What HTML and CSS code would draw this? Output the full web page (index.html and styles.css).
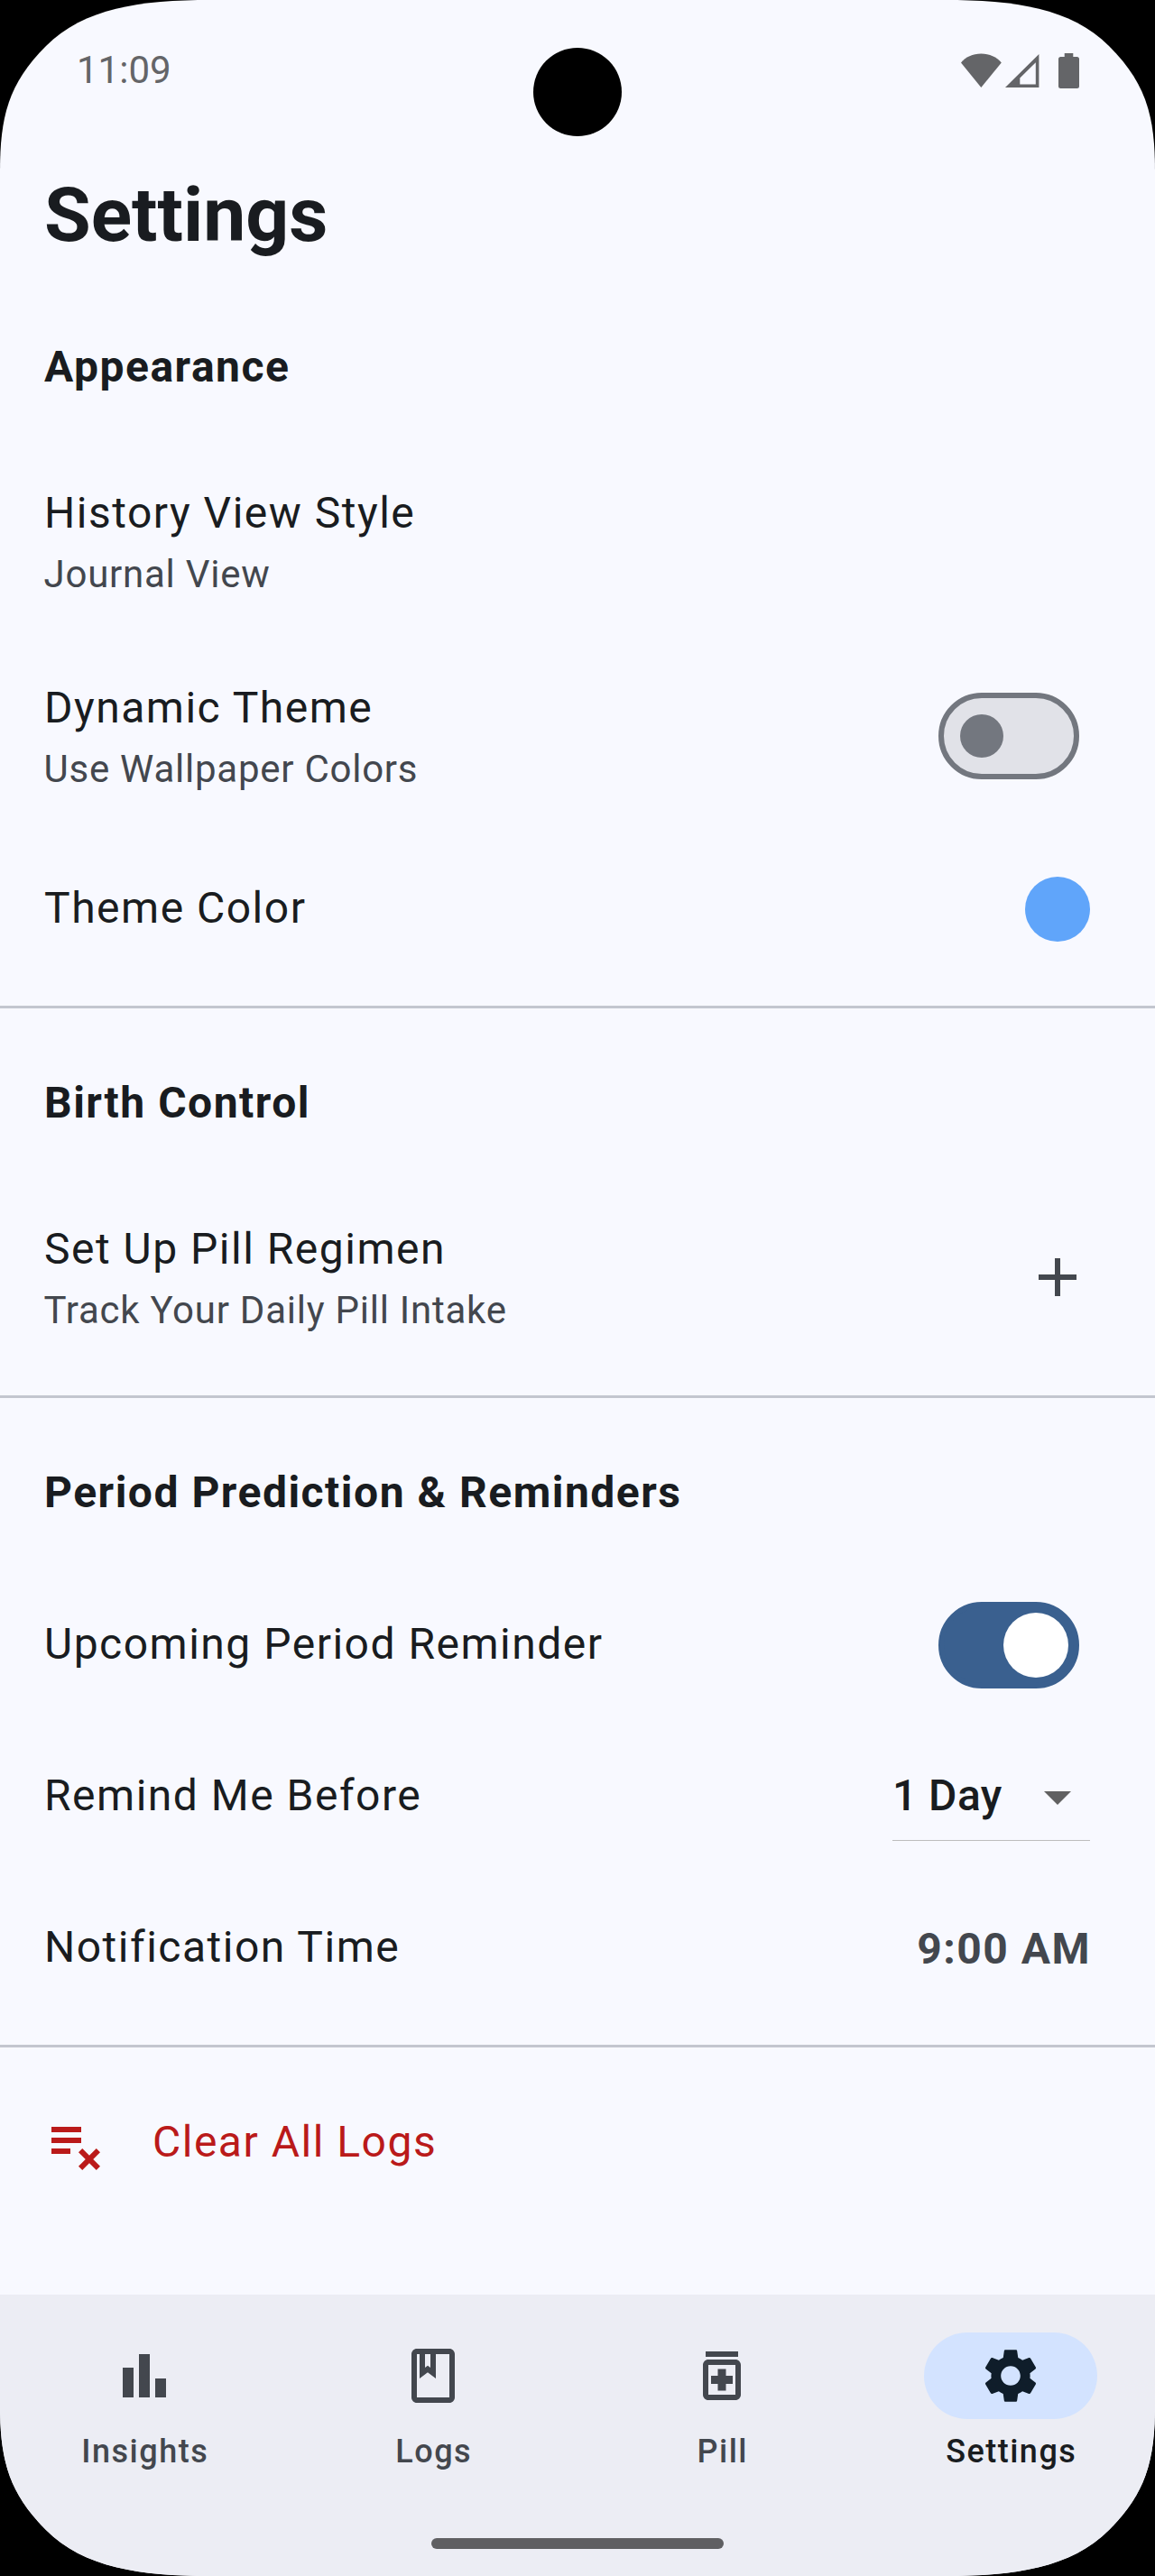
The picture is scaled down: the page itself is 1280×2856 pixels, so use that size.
FILE: index.html
```html
<!DOCTYPE html>
<html lang="en">
<head>
<meta charset="utf-8">
<title>Settings</title>
<link rel="stylesheet" href="styles.css">
</head>
<body>
<div class="phone">
  <header class="status-bar">
    <span class="clock">11:09</span>
    <svg class="status-icons" width="136" height="42" viewBox="0 0 136 42" aria-hidden="true">
      <path d="M27.3 40 5 12.4C10 6.500 18 2.600 27.300 2.600S44.600 6.500 49.800 12.400Z"/>
      <path fill-rule="evenodd" d="M54 40 91.400 3V40ZM70.300 29.500V36.500H87.800V12.300Z"/>
      <path d="M119.700 2H129.300V6H133.500Q136 6 136 8.500V38.500Q136 41 133.500 41H115.500Q113 41 113 38.500V8.500Q113 6 115.500 6H119.700Z"/>
    </svg>
  </header>
  <div class="camera"></div>

  <main class="content">
    <h1 class="page-title">Settings</h1>

    <section class="section">
      <h2 class="section-title">Appearance</h2>
      <div class="tile tile-tall">
        <div class="tile-text">
          <div class="tile-title">History View Style</div>
          <div class="tile-subtitle">Journal View</div>
        </div>
      </div>
      <div class="tile tile-tall">
        <div class="tile-text">
          <div class="tile-title">Dynamic Theme</div>
          <div class="tile-subtitle">Use Wallpaper Colors</div>
        </div>
        <div class="switch"><span class="thumb"></span></div>
      </div>
      <div class="tile">
        <div class="tile-title">Theme Color</div>
        <span class="swatch"></span>
      </div>
    </section>

    <section class="section">
      <h2 class="section-title">Birth Control</h2>
      <div class="tile tile-tall">
        <div class="tile-text">
          <div class="tile-title">Set Up Pill Regimen</div>
          <div class="tile-subtitle">Track Your Daily Pill Intake</div>
        </div>
        <svg class="icon" viewBox="0 0 24 24"><path d="M19 13h-6v6h-2v-6H5v-2h6V5h2v6h6z"/></svg>
      </div>
    </section>

    <section class="section">
      <h2 class="section-title">Period Prediction &amp; Reminders</h2>
      <div class="tile">
        <div class="tile-title">Upcoming Period Reminder</div>
        <div class="switch switch-on"><span class="thumb"></span></div>
      </div>
      <div class="tile">
        <div class="tile-title">Remind Me Before</div>
        <div class="dropdown">
          <span class="dropdown-value">1 Day</span>
          <svg class="icon icon-arrow" viewBox="0 0 24 24"><path d="M7 10l5 5 5-5z"/></svg>
        </div>
      </div>
      <div class="tile">
        <div class="tile-title">Notification Time</div>
        <div class="time-value">9:00 AM</div>
      </div>
    </section>

    <div class="tile tile-danger">
      <svg class="icon" viewBox="0 0 24 24"><path d="M14 10H3v2h11v-2zm0-4H3v2h11V6zM3 16h7v-2H3v2zm11.410 6L17 19.410 19.590 22 21 20.590 18.410 18 21 15.410 19.590 14 17 16.590 14.410 14 13 15.410 15.590 18 13 20.590z"/></svg>
      <div class="tile-title">Clear All Logs</div>
    </div>
  </main>

  <nav class="nav">
    <div class="nav-items">
      <div class="nav-item">
        <span class="nav-pill"><svg class="icon" viewBox="0 0 24 24"><path d="M4 9h4v11H4zM16 13h4v7h-4zM10 4h4v16h-4z"/></svg></span>
        <span class="nav-label">Insights</span>
      </div>
      <div class="nav-item">
        <span class="nav-pill"><svg class="icon" viewBox="0 0 24 24"><path d="M18 2H6c-1.100 0-2 .9-2 2v16c0 1.100.9 2 2 2h12c1.100 0 2-.9 2-2V4c0-1.100-.9-2-2-2zM9 4h2v5l-1-.75L9 9V4zm9 16H6V4h1v9l3-2.250L13 13V4h5v16z"/></svg></span>
        <span class="nav-label">Logs</span>
      </div>
      <div class="nav-item">
        <span class="nav-pill"><svg class="icon" viewBox="0 0 24 24"><path d="M6 3h12v2H6zM17 6H7c-1.100 0-2 .9-2 2v11c0 1.100.9 2 2 2h10c1.100 0 2-.9 2-2V8c0-1.100-.9-2-2-2zm0 13H7V8h10v11zM10.500 17.500h3V15H16v-3h-2.500V9.500h-3V12H8v3h2.500z"/></svg></span>
        <span class="nav-label">Pill</span>
      </div>
      <div class="nav-item nav-item-active">
        <span class="nav-pill"><svg class="icon" viewBox="0 0 24 24"><path d="M19.140 12.940c.04-.3.06-.61.06-.94 0-.32-.02-.64-.07-.94l2.030-1.580c.18-.14.23-.41.12-.61l-1.920-3.320c-.12-.22-.37-.29-.59-.22l-2.390.96c-.5-.38-1.030-.7-1.620-.94l-.36-2.540c-.04-.24-.24-.41-.48-.41h-3.840c-.24 0-.43.17-.47.41l-.36 2.540c-.59.24-1.130.57-1.620.94l-2.390-.96c-.22-.08-.47 0-.59.22L2.740 8.870c-.12.21-.08.47.12.61l2.030 1.580c-.05.3-.09.63-.09.94s.02.64.07.94l-2.030 1.580c-.18.14-.23.41-.12.61l1.920 3.320c.12.22.37.29.59.22l2.390-.96c.5.38 1.030.7 1.620.94l.36 2.540c.05.24.24.41.48.41h3.840c.24 0 .44-.17.47-.41l.36-2.540c.59-.24 1.130-.56 1.620-.94l2.390.96c.22.08.47 0 .59-.22l1.920-3.320c.12-.22.07-.47-.12-.61l-2.010-1.580zM12 15.600c-1.980 0-3.600-1.620-3.600-3.600s1.620-3.600 3.600-3.600 3.600 1.620 3.600 3.600-1.620 3.600-3.600 3.600z"/></svg></span>
        <span class="nav-label">Settings</span>
      </div>
    </div>
    <div class="home-handle"></div>
  </nav>
</div>
</body>
</html>
```
FILE: styles.css
```css
* { box-sizing: border-box; }

body {
  margin: 0;
  background: #000;
  font-family: Roboto, "Liberation Sans", sans-serif;
  color: #191c20;
}

.phone {
  position: relative;
  display: flex;
  flex-direction: column;
  width: 1280px;
  height: 2856px;
  background: #f8f9ff;
  clip-path: path("M234 0H1046C1125 0 1187 9 1229 51C1271 93 1280 130 1280 190V2666C1280 2726 1271 2763 1229 2805C1187 2847 1125 2856 1046 2856H234C155 2856 93 2847 51 2805C9 2763 0 2726 0 2666V190C0 130 9 93 51 51C93 9 155 0 234 0Z");
}

/* Status bar */
.status-bar {
  display: flex;
  align-items: center;
  justify-content: space-between;
  height: 156px;
  padding: 0 84px 0 85px;
}
.clock {
  font-size: 42px;
  line-height: 50px;
  color: #646568;
}
.status-icons { fill: #646568; }
.camera {
  position: absolute;
  top: 53px;
  left: 591px;
  width: 98px;
  height: 98px;
  border-radius: 50%;
  background: #000;
}

/* Content */
.content { flex: 1; }
.page-title {
  margin: 0;
  padding: 0 49px;
  height: 168px;
  font-size: 84px;
  font-weight: 700;
  line-height: 165px;
}
.section {
  position: relative;
  padding-bottom: 23px;
  margin-bottom: 22px;
  border-bottom: 3px solid #c3c6cf;
}
.section-title {
  margin: 0;
  padding: 0 49px;
  height: 168px;
  font-size: 48px;
  font-weight: 700;
  line-height: 166px;
  letter-spacing: 1.5px;
}
.tile {
  display: flex;
  align-items: center;
  justify-content: space-between;
  height: 168px;
  padding: 0 72px 0 48px;
}
.tile-tall { height: 216px; }
.tile-title {
  font-size: 48px;
  line-height: 72px;
  letter-spacing: 1.5px;
  padding: 0 0 2px 1px;
}
.tile-subtitle {
  font-size: 42px;
  line-height: 60px;
  letter-spacing: 0.75px;
  padding-left: 0.5px;
  color: #43474e;
}
.icon {
  display: block;
  width: 72px;
  height: 72px;
  fill: #43474e;
}

.switch {
  display: flex;
  align-items: center;
  width: 156px;
  height: 96px;
  margin-right: 12px;
  padding-left: 18px;
  border: 6px solid #73777f;
  border-radius: 48px;
  background: #e1e2e8;
}
.thumb {
  width: 48px;
  height: 48px;
  border-radius: 50%;
  background: #73777f;
}
.switch-on {
  padding-left: 66px;
  border-color: #3a608f;
  background: #3a608f;
}
.switch-on .thumb {
  width: 72px;
  height: 72px;
  background: #fff;
}
.swatch {
  width: 72px;
  height: 72px;
  border-radius: 50%;
  background: #60a5fa;
}

.dropdown {
  display: flex;
  align-items: center;
  justify-content: space-between;
  width: 219px;
  height: 98px;
  border-bottom: 1px solid #bdbdbd;
}
.dropdown-value {
  font-size: 48px;
  font-weight: 500;
  line-height: 72px;
  letter-spacing: 0.45px;
  padding-bottom: 2px;
}
.icon-arrow { fill: #616161; }
.time-value {
  margin-right: -1px;
  padding-top: 1px;
  font-size: 48px;
  font-weight: 700;
  line-height: 72px;
  letter-spacing: 1.5px;
  color: #43474e;
}
.tile-danger {
  justify-content: flex-start;
  gap: 48px;
  color: #ba1a1a;
}
.tile-danger .icon { fill: #ba1a1a; }

/* Bottom navigation */
.nav {
  height: 312px;
  background: #ecedf4;
}
.nav-items {
  display: grid;
  grid-template-columns: repeat(4, 1fr);
  height: 270px;
  padding-top: 42px;
}
.nav-item {
  display: flex;
  flex-direction: column;
  align-items: center;
  gap: 12px;
}
.nav-pill {
  display: flex;
  align-items: center;
  justify-content: center;
  width: 192px;
  height: 96px;
  border-radius: 48px;
}
.nav-label {
  font-size: 36px;
  font-weight: 500;
  line-height: 48px;
  letter-spacing: 1.5px;
  padding-left: 1.5px;
  color: #43474e;
}
.nav-item-active .nav-pill { background: #d3e3ff; }
.nav-item-active .icon { fill: #0f1d2a; }
.nav-item-active .nav-label { color: #191c20; }
.home-handle {
  width: 324px;
  height: 12px;
  margin: 0 auto;
  border-radius: 6px;
  background: #5f5f62;
}
```
